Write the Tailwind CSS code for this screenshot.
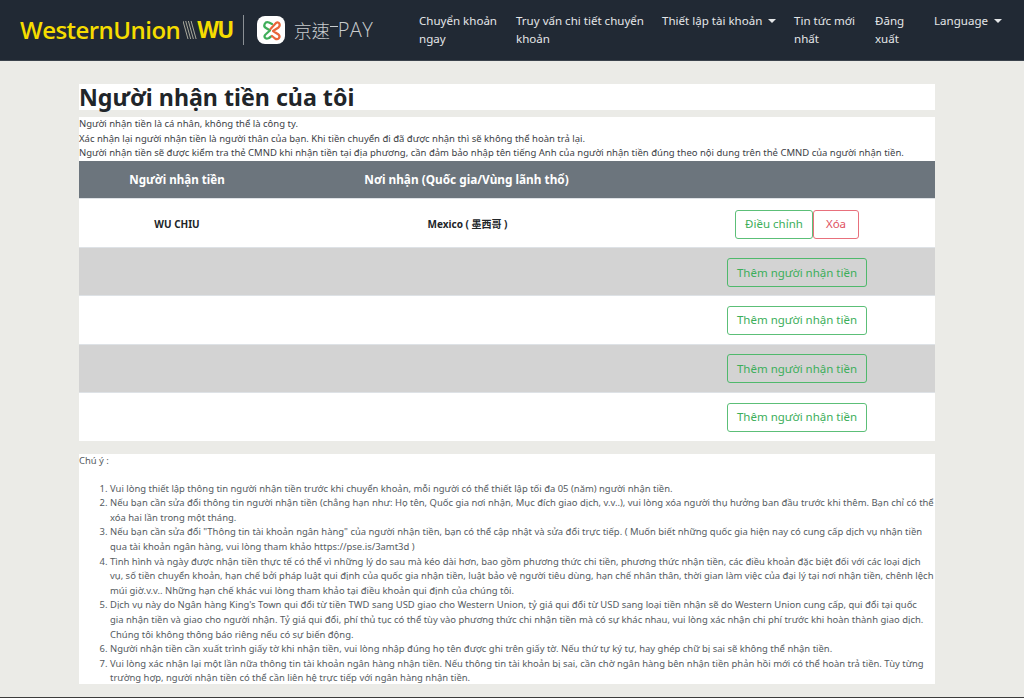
<!DOCTYPE html>
<html lang="vi">
<head>
    <meta charset="UTF-8">
    <title>Người nhận tiền của tôi</title>
    <script src="https://cdn.jsdelivr.net/npm/@tailwindcss/browser@4"></script>
</head>
<body class="bg-[#ebebe7] h-[698px] overflow-hidden font-['Noto_Sans','Open_Sans',sans-serif] text-[#212529]">

    <!-- Thanh menu -->
    <nav class="h-[61px] bg-[#212934] flex items-start border-b border-[#3a424c]">
        <div class="w-[410px] h-[60px] shrink-0 flex items-center pl-[20px]">
            <span class="font-['Open_Sans',sans-serif] text-[#f5dc00] text-[24px] font-semibold tracking-[-0.55px] leading-none">WesternUnion</span>
            <svg width="14" height="18" viewBox="0 0 14 18" class="ml-[3px]" fill="none" stroke="#a9a99c" stroke-width="1">
                <path d="M0 0L5 18M2.7 0L7.7 18M5.4 0L10.4 18M8.1 0L13.1 18"/>
            </svg>
            <span class="font-['Open_Sans',sans-serif] text-[#f5dc00] text-[22.5px] font-bold tracking-[-1.6px] leading-none">WU</span>
            <span class="w-px h-[30px] bg-[#8b9095] ml-[10px]"></span>
            <svg width="30" height="30" viewBox="0 0 30 30" class="ml-[12px]" fill="none" stroke-linecap="round" stroke-linejoin="round">
                <rect x="1" y="1" width="28" height="28" rx="8" fill="#fff"/>
                <path d="M16 9L13 7.5C9 6 6.5 11 10 13L14 15.5L10 19C7 21.500 9 25 13 23L15 21.500" stroke="#3fae5a" stroke-width="2.2"/>
                <path d="M14.500 14L20 8C23 6 25 10 22.500 12.500L17 16L22.500 19.500C25 22 22 25.500 19 23.500L16 21" stroke="#e8663a" stroke-width="2.2"/>
            </svg>
            <span class="ml-[8px] font-['Noto_Sans_CJK_TC',sans-serif] font-light text-[#c9ccce] text-[18px] leading-none whitespace-nowrap">京速</span>
            <span class="w-[8px] h-px bg-[#c9ccce] mb-[8px]"></span>
            <span class="font-['Open_Sans',sans-serif] font-light text-[#c9ccce] text-[20px] tracking-[0.4px] leading-none whitespace-nowrap">PAY</span>
        </div>
        <ul class="flex text-[11.55px] leading-[18px] text-[#e4e6e8] pt-[12px]">
            <li class="w-[97px] pl-[9px]">Chuyển khoản ngay</li>
            <li class="w-[146px] pl-[9px]">Truy vấn chi tiết chuyển khoản</li>
            <li class="w-[132px] pl-[9px] whitespace-nowrap">Thiết lập tài khoản<span class="inline-block ml-[6px] align-[2px] border-x-[4px] border-x-transparent border-t-[4px] border-t-[#e4e6e8]"></span></li>
            <li class="w-[81px] pl-[9px]">Tin tức mới nhất</li>
            <li class="w-[59px] pl-[9px]">Đăng xuất</li>
            <li class="pl-[9px] whitespace-nowrap">Language<span class="inline-block ml-[6px] align-[2px] border-x-[4px] border-x-transparent border-t-[4px] border-t-[#e4e6e8]"></span></li>
        </ul>
    </nav>

    <main class="w-[856px] ml-[79px] pt-[23px]">
        <h1 class="bg-white h-[26px] text-[23.2px] leading-[27px] font-bold text-[#212529]">Người nhận tiền của tôi</h1>

        <div class="bg-white mt-[7px] h-[44px] text-[9.5px] leading-[14.6px] text-[#3c4146] whitespace-nowrap">
            <p>Người nhận tiền là cá nhân, không thể là công ty.</p>
            <p>Xác nhận lại người nhận tiền là người thân của bạn. Khi tiền chuyển đi đã được nhận thì sẽ không thể hoàn trả lại.</p>
            <p>Người nhận tiền sẽ được kiểm tra thẻ CMND khi nhận tiền tại địa phương, cần đảm bảo nhập tên tiếng Anh của người nhận tiền đúng theo nội dung trên thẻ CMND của người nhận tiền.</p>
        </div>

        <!-- Bang nguoi nhan -->
        <div class="flex h-[38px] items-center bg-[#6c757d] text-white text-[11.6px] font-bold border-b border-[#dee2e6]">
            <div class="w-[196px] text-center">Người nhận tiền</div>
            <div class="w-[383px] text-center text-[11.8px]">Nơi nhận (Quốc gia/Vùng lãnh thổ)</div>
        </div>
        <div class="flex h-[49px] pt-[2px] items-center bg-white border-b border-[#dee2e6]">
            <div class="w-[196px] text-center text-[10px] font-bold">WU CHIU</div>
            <div class="w-[385px] text-center text-[10px] font-bold font-['Noto_Sans','Noto_Sans_CJK_TC',sans-serif]">Mexico ( 墨西哥 )</div>
            <div class="flex ml-[75px]">
                <a class="w-[78px] h-[29px] flex items-center justify-center border border-[#5cbf78] rounded-[3px] text-[#3cae5a] text-[11.5px]">Điều chỉnh</a>
                <a class="w-[46px] h-[29px] flex items-center justify-center border border-[#e8707c] rounded-[3px] text-[#e0505e] text-[11.5px]">Xóa</a>
            </div>
        </div>
        <div class="flex h-[48px] pt-[2px] items-center justify-end pr-[68px] bg-[#d3d3d3] border-b border-[#dee2e6]">
            <a class="w-[140px] h-[29px] flex items-center justify-center border border-[#4fb96c] rounded-[3px] text-[#3cae5a] text-[11.5px]">Thêm người nhận tiền</a>
        </div>
        <div class="flex h-[49px] items-center justify-end pr-[68px] bg-white border-b border-[#dee2e6]">
            <a class="w-[140px] h-[29px] flex items-center justify-center border border-[#5cbf78] rounded-[3px] text-[#3cae5a] text-[11.5px]">Thêm người nhận tiền</a>
        </div>
        <div class="flex h-[48px] items-center justify-end pr-[68px] bg-[#d3d3d3] border-b border-[#dee2e6]">
            <a class="w-[140px] h-[29px] flex items-center justify-center border border-[#4fb96c] rounded-[3px] text-[#3cae5a] text-[11.5px]">Thêm người nhận tiền</a>
        </div>
        <div class="flex h-[48px] items-center justify-end pr-[68px] bg-white">
            <a class="w-[140px] h-[29px] flex items-center justify-center border border-[#5cbf78] rounded-[3px] text-[#3cae5a] text-[11.5px]">Thêm người nhận tiền</a>
        </div>

        <!-- Chu y -->
        <div class="bg-white mt-[13px] h-[230px] text-[9.45px] leading-[14.6px] text-[#555b61]">
            <p>Chú ý :</p>
            <ol class="list-decimal pl-[31px] mt-[13px]">
                <li>Vui lòng thiết lập thông tin người nhận tiền trước khi chuyển khoản, mỗi người có thể thiết lập tối đa 05 (năm) người nhận tiền.</li>
                <li>Nếu bạn cần sửa đổi thông tin người nhận tiền (chẳng hạn như: Họ tên, Quốc gia nơi nhận, Mục đích giao dịch, v.v..), vui lòng xóa người thụ hưởng ban đầu trước khi thêm. Bạn chỉ có thể xóa hai lần trong một tháng.</li>
                <li>Nếu bạn cần sửa đổi "Thông tin tài khoản ngân hàng" của người nhận tiền, bạn có thể cập nhật và sửa đổi trực tiếp. ( Muốn biết những quốc gia hiện nay có cung cấp dịch vụ nhận tiền qua tài khoản ngân hàng, vui lòng tham khảo https://pse.is/3amt3d )</li>
                <li>Tình hình và ngày được nhận tiền thực tế có thể vì những lý do sau mà kéo dài hơn, bao gồm phương thức chi tiền, phương thức nhận tiền, các điều khoản đặc biệt đối với các loại dịch vụ, số tiền chuyển khoản, hạn chế bởi pháp luật qui định của quốc gia nhận tiền, luật bảo vệ người tiêu dùng, hạn chế nhân thân, thời gian làm việc của đại lý tại nơi nhận tiền, chênh lệch múi giờ.v.v.. Những hạn chế khác vui lòng tham khảo tại điều khoản qui định của chúng tôi.</li>
                <li>Dịch vụ này do Ngân hàng King's Town qui đổi từ tiền TWD sang USD giao cho Western Union, tỷ giá qui đổi từ USD sang loại tiền nhận sẽ do Western Union cung cấp, qui đổi tại quốc<br>gia nhận tiền và giao cho người nhận. Tỷ giá qui đổi, phí thủ tục có thể tùy vào phương thức chi nhận tiền mà có sự khác nhau, vui lòng xác nhận chi phí trước khi hoàn thành giao dịch. Chúng tôi không thông báo riêng nếu có sự biến động.</li>
                <li>Người nhận tiền cần xuất trình giấy tờ khi nhận tiền, vui lòng nhập đúng họ tên được ghi trên giấy tờ. Nếu thứ tự ký tự, hay ghép chữ bị sai sẽ không thể nhận tiền.</li>
                <li>Vui lòng xác nhận lại một lần nữa thông tin tài khoản ngân hàng nhận tiền. Nếu thông tin tài khoản bị sai, cần chờ ngân hàng bên nhận tiền phản hồi mới có thể hoàn trả tiền. Tùy từng trường hợp, người nhận tiền có thể cần liên hệ trực tiếp với ngân hàng nhận tiền.</li>
            </ol>
        </div>
        <div class="-ml-[79px] w-[1024px] h-[2px] mt-[13px] bg-[#3c3c3c]"></div>
    </main>
</body>
</html>
